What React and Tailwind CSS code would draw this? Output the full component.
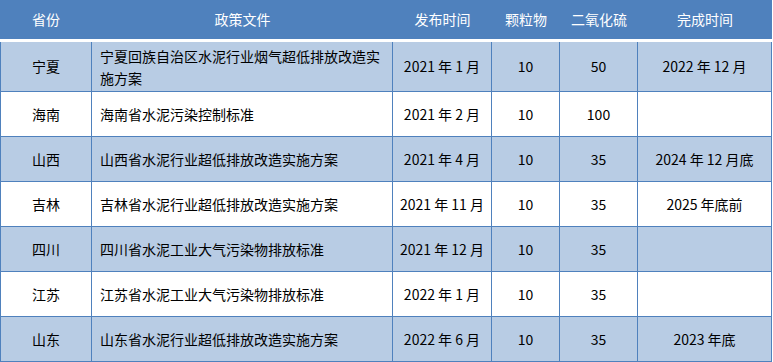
const rows = [
  { p: "宁夏", doc: "宁夏回族自治区水泥行业烟气超低排放改造实施方案", date: "2021 年 1 月", pm: "10", so2: "50", done: "2022 年 12 月" },
  { p: "海南", doc: "海南省水泥污染控制标准", date: "2021 年 2 月", pm: "10", so2: "100", done: "" },
  { p: "山西", doc: "山西省水泥行业超低排放改造实施方案", date: "2021 年 4 月", pm: "10", so2: "35", done: "2024 年 12 月底" },
  { p: "吉林", doc: "吉林省水泥行业超低排放改造实施方案", date: "2021 年 11 月", pm: "10", so2: "35", done: "2025 年底前" },
  { p: "四川", doc: "四川省水泥工业大气污染物排放标准", date: "2021 年 12 月", pm: "10", so2: "35", done: "" },
  { p: "江苏", doc: "江苏省水泥工业大气污染物排放标准", date: "2022 年 1 月", pm: "10", so2: "35", done: "" },
  { p: "山东", doc: "山东省水泥行业超低排放改造实施方案", date: "2022 年 6 月", pm: "10", so2: "35", done: "2023 年底" },
];

const font = { fontFamily: '"Noto Sans CJK SC", "Noto Sans", sans-serif' };

export default function App() {
  return (
    <div className="w-[773px] h-[362px] bg-white text-[14px] text-black" style={font}>
      <div className="w-[772px]">
        {/* header */}
        <div className="flex h-[39px] bg-[#4F81BD] text-white">
          <div className="w-[92px] flex items-center justify-center">省份</div>
          <div className="w-[301px] flex items-center justify-center">政策文件</div>
          <div className="w-[99px] flex items-center justify-center">发布时间</div>
          <div className="w-[68px] flex items-center justify-center">颗粒物</div>
          <div className="w-[78px] flex items-center justify-center">二氧化硫</div>
          <div className="flex-1 flex items-center justify-center">完成时间</div>
        </div>

        {/* body */}
        <div className="mt-[3px] border-x border-[#4F81BD]">
          {rows.map((r, i) => (
            <div
              key={r.p}
              className={`flex border-b border-[#4F81BD] ${i === 0 ? "h-[50px]" : "h-[45px]"} ${i % 2 === 0 ? "bg-[#B8CCE4]" : "bg-white"}`}
            >
              <div className="w-[91px] shrink-0 border-r border-[#4F81BD] flex items-center justify-center">{r.p}</div>
              <div className="w-[301px] shrink-0 border-r border-[#4F81BD] flex items-center pl-2 pr-2 leading-[22px]">{r.doc}</div>
              <div className="w-[99px] shrink-0 border-r border-[#4F81BD] flex items-center justify-center">{r.date}</div>
              <div className="w-[68px] shrink-0 border-r border-[#4F81BD] flex items-center justify-center">{r.pm}</div>
              <div className="w-[78px] shrink-0 border-r border-[#4F81BD] flex items-center justify-center">{r.so2}</div>
              <div className="flex-1 flex items-center justify-center">{r.done}</div>
            </div>
          ))}
        </div>
      </div>
    </div>
  );
}
